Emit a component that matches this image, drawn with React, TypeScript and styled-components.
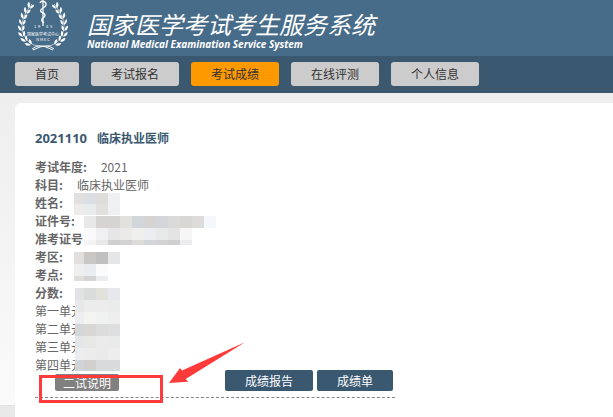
import React from "react";
import styled, { createGlobalStyle } from "styled-components";

const sans = '"Noto Sans CJK SC", sans-serif';

const GlobalStyle = createGlobalStyle`
  * { box-sizing: border-box; }
  body {
    margin: 0;
    background: #e9e9e9;
    color: #666;
    font: 12px/18px ${sans};
  }
  h1, h2, p, dl, dd, ul { margin: 0; padding: 0; }
  button { font: inherit; border: 0; cursor: pointer; }
`;

const Page = styled.div`
  min-height: 100vh;
  display: flex;
  flex-direction: column;
  overflow: hidden;
`;

const Header = styled.header`
  display: flex;
  height: 56px;
  padding-left: 18px;
  background: #476c89;
  color: #fff;
`;

const Emblem = styled.svg`
  flex: none;
  width: 50px;
  height: 52px;
`;

const Brand = styled.div`
  padding: 8px 0 0 19px;
  white-space: nowrap;
`;

const BrandName = styled.h1`
  font: italic 400 24px/32px ${sans};
`;

const BrandSub = styled.p`
  font: italic 700 10px/8px "Open Sans", sans-serif;
`;

const Nav = styled.nav`
  display: flex;
  gap: 12px;
  height: 37px;
  padding: 6px 15px 0;
  background: #3b5871;
`;

const NavLink = styled.a<{ $active?: boolean }>`
  flex: none;
  height: 24px;
  padding: 0 20px;
  border-radius: 3px;
  background: ${(p) => (p.$active ? "#ff9900" : "#cccccc")};
  color: #333;
  line-height: 24px;
  text-decoration: none;
`;

const Main = styled.main`
  flex: 1;
  display: flex;
  padding: 10px 0 0 15px;
  background: linear-gradient(#eeeeee, #fafafa 312px, #d8d8d8 312px, #e9e9e9 313px);
`;

const Card = styled.section`
  position: relative;
  flex: 1;
  padding: 26px 20px 14px;
  border-radius: 6px 0 0 0;
  background: #fff;
`;

const Title = styled.h2`
  display: flex;
  gap: 10px;
  margin-bottom: 11px;
  color: #3b5871;
  font-size: 12px;
  font-weight: 700;
  line-height: 18px;
`;

const Code = styled.span`
  font: 700 13px/18px "Noto Sans", sans-serif;
`;

const Record = styled.div`
  max-width: 360px;
  padding-bottom: 6px;
  border-bottom: 1px dashed #888;
`;

const Field = styled.div`
  display: flex;
  height: 18px;
`;

const Label = styled.dt`
  font-weight: 700;
`;

const Value = styled.dd`
  && { margin-left: 14px; }
`;

const Actions = styled.div`
  display: flex;
  align-items: flex-end;
  gap: 4px;
  margin-top: -4px;
  padding: 0 2px 0 20px;
`;

const NoteButton = styled.button`
  height: 17px;
  margin-right: auto;
  padding: 0 8px;
  border-radius: 2px;
  background: #808080;
  color: #fff;
  line-height: 17px;
`;

const ActionButton = styled.button`
  height: 21px;
  padding: 0 20px;
  border-radius: 2px;
  background: #3b5871;
  color: #fff;
  line-height: 21px;
`;

const Overlay = styled.svg`
  position: absolute;
  top: 0;
  left: 0;
  width: 240px;
  height: 310px;
  pointer-events: none;
`;

type Strip = { y: number; h: number; x: number; colors: string[] };

const strips: Strip[] = [
  { y: 193, h: 11, x: 74, colors: ["e2e0df", "dbdee2", "dedddc", "eff0f3"] },
  { y: 204, h: 11, x: 74, colors: ["edecea", "e9ecec", "e1e0de", "eff0f3"] },
  { y: 216, h: 12, x: 84, colors: ["e8e8e8", "d5d4d3", "d6d4d3", "e2e1de", "d2d6da", "d5d4d3", "d2d6da", "dadad9", "d8d7d5", "dddcda", "f4f8fc"] },
  { y: 228, h: 12, x: 84, colors: ["fafafa", "f0f0f2", "e6e6e6", "ebeae8", "efefee", "ebedf0", "e8eaea", "e4e4e4", "f6f6f6"] },
  { y: 240, h: 5, x: 84, colors: ["f4f4f4", "e8e8e8", "cfcfcf", "d2d2d2", "dedcd8", "d2d6da", "d2d2d4", "cfcfcf", "ececee"] },
  { y: 252, h: 12, x: 74, colors: ["e2e0de", "cac8c6", "c0c0c0", "e5e6e8"] },
  { y: 264, h: 12, x: 74, colors: ["efefef", "eaedf0", "fbfbfb"] },
  { y: 276, h: 5, x: 74, colors: ["e0dedb", "d2d4d6", "ecedef"] },
  { y: 288, h: 12, x: 75, colors: ["e2e3e4", "d9dcdb", "e2e1dc", "e6e8ed"] },
  { y: 300, h: 12, x: 75, colors: ["e6e8ea", "ececec", "ececec", "eaecec"] },
  { y: 312, h: 12, x: 75, colors: ["edeef1", "f4f5f3", "f0f1f1", "eeeeee"] },
  { y: 324, h: 12, x: 75, colors: ["d3d7da", "d8d7d6", "dcdcdc", "dddee0"] },
  { y: 336, h: 12, x: 75, colors: ["e4e7e9", "e7e8e6", "ebebeb", "e9ebeb"] },
  { y: 348, h: 12, x: 75, colors: ["ebedef", "ececec", "eaeaea", "ededed"] },
  { y: 360, h: 11, x: 75, colors: ["d0d4d8", "d2d0ce", "d8dadc", "d9dadc"] },
];

const Markup = () => (
  <Overlay viewBox="15 103 240 310" aria-hidden="true" shapeRendering="crispEdges">
    {strips.map((s) =>
      s.colors.map((c, i) => {
        const left = i === 0 ? s.x : 84 + (s.x < 84 ? i - 1 : i) * 12;
        const right = s.x < 84 ? 84 + i * 12 : 96 + i * 12;
        return <rect key={`${s.y}-${i}`} x={left} y={s.y} width={right - left} height={s.h} fill={`#${c}`} />;
      })
    )}
    <rect x="40.5" y="376.5" width="121" height="25" fill="none" stroke="#fe3a3a" strokeWidth="3" />
    <path d="M169 383 L180 368 L182 370.5 L245 342.3 L185.7 379 L188 381.7 Z" fill="#fe3a3a" shapeRendering="auto" />
  </Overlay>
);

const leaves = [
  [12, 6, 24], [8.5, 11, 18], [5.5, 16.5, 10], [4, 22.5, 2], [3.2, 28.5, -8],
  [4, 34.5, -20], [6.5, 39.5, -34], [11, 43.5, -50],
];

const Branch = () => (
  <g>
    <path d="M14 4 Q-5 27 12 43 Q16 46 22 46" fill="none" stroke="#fff" strokeWidth="0.6" />
    {leaves.map(([x, y, a]) => (
      <g key={y} transform={`translate(${x} ${y}) rotate(${a})`}>
        <path d="M0 2.5 Q-4.2 0.5 -2.6 -3.5 Q0.6 -1 0 2.5Z" />
        <path d="M1 2.5 Q0.2 -1.5 3.4 -2.8 Q4.2 1 1 2.5Z" />
      </g>
    ))}
    <path d="M14 49 Q20 44 28 47 L35 50" fill="none" stroke="#fff" strokeWidth="1" />
  </g>
);

const Logo = () => (
  <Emblem viewBox="0 0 50 52" fill="#fff" role="img" aria-label="NMEC">
    <Branch />
    <g transform="translate(50 0) scale(-1 1)">
      <Branch />
    </g>
    <path d="M25 0 V26" stroke="#fff" strokeWidth="1.2" />
    <path d="M22 3 Q23 0 27 2 Q30 5 25 8 Q20 11 25 13 Q29 15 25 18 Q22 20 26 23" fill="none" stroke="#fff" strokeWidth="1.4" />
    <g fontFamily='"Noto Sans CJK SC", sans-serif' fontSize="4" textAnchor="middle">
      <text x="17" y="28">1</text>
      <text x="21" y="28">9</text>
      <text x="29" y="28">8</text>
      <text x="33" y="28">5</text>
      <text x="25" y="36">国家医学考试中心</text>
      <text x="25" y="41">N M E C</text>
    </g>
  </Emblem>
);

const navItems = ["首页", "考试报名", "考试成绩", "在线评测", "个人信息"];

const fields: { label: string; value?: string }[] = [
  { label: "考试年度:", value: "2021" },
  { label: "科目:", value: "临床执业医师" },
  { label: "姓名:" },
  { label: "证件号:" },
  { label: "准考证号" },
  { label: "考区:" },
  { label: "考点:" },
  { label: "分数:" },
];

const units = ["第一单元", "第二单元", "第三单元", "第四单元"];

export default function App() {
  return (
    <Page>
      <GlobalStyle />
      <Header>
        <Logo />
        <Brand>
          <BrandName>国家医学考试考生服务系统</BrandName>
          <BrandSub>National Medical Examination Service System</BrandSub>
        </Brand>
      </Header>
      <Nav>
        {navItems.map((item) => (
          <NavLink key={item} href="#" $active={item === "考试成绩"}>
            {item}
          </NavLink>
        ))}
      </Nav>
      <Main>
        <Card>
          <Title>
            <Code>2021110</Code>
            <span>临床执业医师</span>
          </Title>
          <Record>
            <dl>
              {fields.map((f) => (
                <Field key={f.label}>
                  <Label>{f.label}</Label>
                  <Value>{f.value}</Value>
                </Field>
              ))}
            </dl>
            {units.map((u) => (
              <Field key={u}>{u}</Field>
            ))}
            <Actions>
              <NoteButton type="button">二试说明</NoteButton>
              <ActionButton type="button">成绩报告</ActionButton>
              <ActionButton type="button">成绩单</ActionButton>
            </Actions>
          </Record>
          <Markup />
        </Card>
      </Main>
    </Page>
  );
}
